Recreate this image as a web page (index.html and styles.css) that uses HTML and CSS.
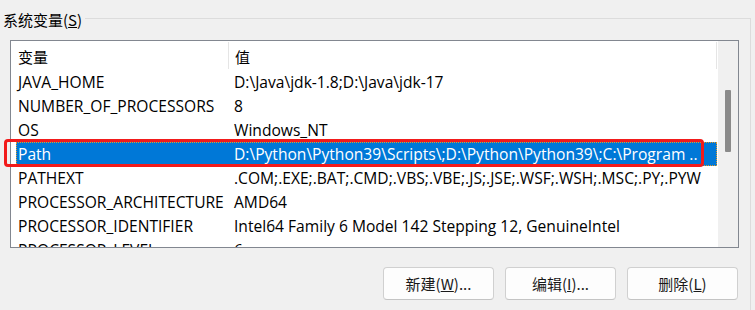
FILE: index.html
```html
<!DOCTYPE html>
<html lang="zh-CN">
<head>
    <meta charset="UTF-8">
    <title>环境变量</title>
    <link rel="stylesheet" href="styles.css">
</head>
<body>
    <div class="group">
        <div class="group-head">
            <span class="group-title">系统变量(<u>S</u>)</span>
            <span class="group-rule"></span>
        </div>
        <div class="group-body">
            <!-- list view with two columns -->
            <div class="listbox">
                <div class="list-main">
                    <div class="list-header">
                        <div class="col-name">变量</div>
                        <div class="col-value">值</div>
                    </div>
                    <div class="row">
                        <div class="col-name">JAVA_HOME</div>
                        <div class="col-value">D:\Java\jdk-1.8;D:\Java\jdk-17</div>
                    </div>
                    <div class="row">
                        <div class="col-name">NUMBER_OF_PROCESSORS</div>
                        <div class="col-value">8</div>
                    </div>
                    <div class="row">
                        <div class="col-name">OS</div>
                        <div class="col-value">Windows_NT</div>
                    </div>
                    <div class="row selected">
                        <div class="col-name">Path</div>
                        <div class="col-value">D:\Python\Python39\Scripts\;D:\Python\Python39\;C:\Program ..</div>
                    </div>
                    <div class="row">
                        <div class="col-name">PATHEXT</div>
                        <div class="col-value">.COM;.EXE;.BAT;.CMD;.VBS;.VBE;.JS;.JSE;.WSF;.WSH;.MSC;.PY;.PYW</div>
                    </div>
                    <div class="row">
                        <div class="col-name">PROCESSOR_ARCHITECTURE</div>
                        <div class="col-value">AMD64</div>
                    </div>
                    <div class="row">
                        <div class="col-name">PROCESSOR_IDENTIFIER</div>
                        <div class="col-value">Intel64 Family 6 Model 142 Stepping 12, GenuineIntel</div>
                    </div>
                    <div class="row">
                        <div class="col-name">PROCESSOR_LEVEL</div>
                        <div class="col-value">6</div>
                    </div>
                </div>
                <div class="scrollbar">
                    <div class="thumb"></div>
                </div>
            </div>

            <!-- red annotation box round the selected row -->
            <span class="marker"></span>

            <div class="buttons">
                <button class="btn">新建(<u>W</u>)...</button>
                <button class="btn">编辑(<u>I</u>)...</button>
                <button class="btn">删除(<u>L</u>)</button>
            </div>
        </div>
    </div>
</body>
</html>
```

FILE: styles.css
```css
/* window background and default font */
body {
    margin: 0;
    background: #f0f0f0;
    font-family: "Open Sans", "Noto Sans CJK SC", sans-serif;
    font-size: 15.6px;
    color: #000;
    overflow: hidden;
}

.group {
    width: 751px;
}

.group-head {
    display: flex;
    align-items: center;
    height: 40px;
    margin-top: -1px;
}

.group-title {
    padding-left: 3px;
    padding-right: 3px;
    font-family: "Noto Sans CJK SC", sans-serif;
    font-size: 15px;
    white-space: nowrap;
}

.group-rule {
    flex: 1;
    align-self: flex-start;
    margin-top: 19px;
    height: 20px;
    border-top: 1px solid #dcdcdc;
    border-right: 1px solid #dcdcdc;
}

.group-body {
    position: relative;
    border-right: 1px solid #dcdcdc;
    padding-top: 1px;
    height: 270px;
}

/* list view */
.listbox {
    display: flex;
    margin-left: 10px;
    width: 727px;
    height: 206px;
    border: 1px solid #828790;
    background: #fff;
    overflow: hidden;
}

.list-main {
    flex: 1;
    overflow: hidden;
}

.list-header {
    display: flex;
    height: 29px;
    font-family: "Noto Sans CJK SC", sans-serif;
    font-size: 15px;
}

.list-header .col-name,
.list-header .col-value {
    height: 27px;
    margin-top: 1px;
    line-height: 30px;
    border-right: 1px solid #e5e5e5;
}

.list-header .col-value {
    flex: 1;
}

.col-name {
    width: 210px;
    padding-left: 7px;
    white-space: nowrap;
    flex-shrink: 0;
}

.col-value {
    padding-left: 6px;
    white-space: nowrap;
    overflow: hidden;
}

.row {
    display: flex;
    height: 24px;
    line-height: 24px;
}

.row .col-value {
    flex: 1;
}

.selected {
    margin-left: 5px;
    background: #0078d7;
    color: #fff;
    outline: 1px dotted #e39a2a;
    outline-offset: -1px;
}

.selected .col-name {
    padding-left: 2px;
}

.marker {
    position: absolute;
    left: 4px;
    top: 100px;
    width: 694px;
    height: 22px;
    border: 3px solid #f21b1b;
    border-radius: 4px;
}

.scrollbar {
    width: 20px;
    margin-left: 1px;
    background: #f0f0f0;
}

.thumb {
    width: 6px;
    height: 62px;
    margin-top: 49px;
    margin-left: 7px;
    background: #8a8a8a;
    border-radius: 1px;
}

/* dialog buttons */
.buttons {
    display: flex;
    justify-content: flex-end;
    gap: 11px;
    width: 738px;
    margin-top: 19px;
}

.btn {
    width: 111px;
    height: 33px;
    background: #fdfdfd;
    border: 1px solid #d0d0d0;
    border-bottom-color: #c4c4c4;
    border-radius: 4px;
    font-family: "Noto Sans CJK SC", sans-serif;
    font-size: 15px;
    color: #1a1a1a;
    padding: 0;
}
```
